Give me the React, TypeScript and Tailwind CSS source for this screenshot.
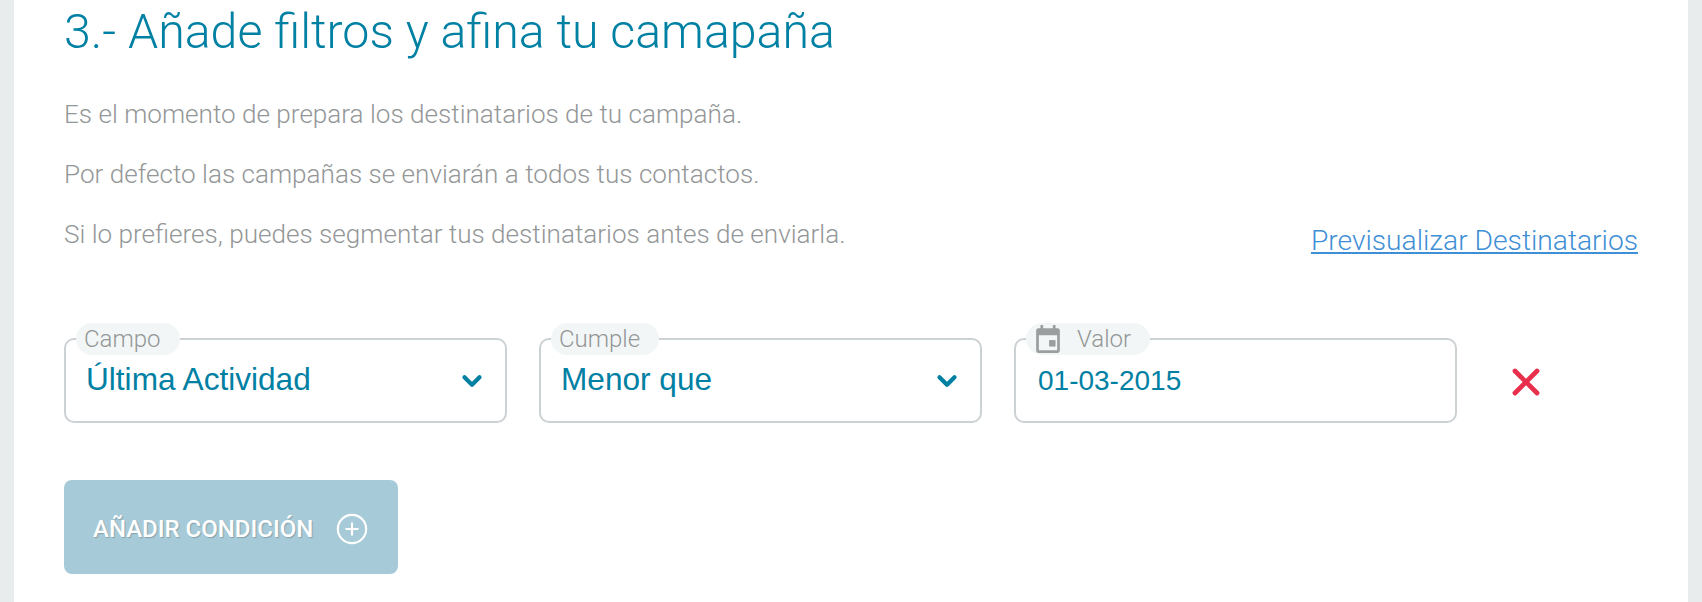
import { ChevronDown, CirclePlus, X } from 'lucide-react';

const roboto = 'font-[Roboto,sans-serif]';
const helvetica = "font-['Liberation_Sans',sans-serif]";

function CalendarIcon() {
  return (
    <svg width="26" height="28" viewBox="0 0 24 26" fill="#9b9e9e" className="shrink-0">
      <path d="M5 0h2.5v3h9V0H19v3h2a2 2 0 0 1 2 2v19a2 2 0 0 1-2 2H3a2 2 0 0 1-2-2V5a2 2 0 0 1 2-2h2V0zM3.5 9.5V23.5h17V9.5h-17z" />
      <rect x="13" y="14" width="6" height="6" />
    </svg>
  );
}

function Field({ label, value, select, calendar }: { label: string; value: string; select?: boolean; calendar?: boolean }) {
  return (
    <div className="relative h-[85px] flex-1 rounded-[10px] border-2 border-[#ccd1d4] bg-white px-[20px]">
      <div className={`absolute -top-[17px] left-[10px] flex h-[32px] items-center gap-[16px] rounded-full bg-[#f2f6f6] pr-[19px] text-[24px] font-light text-[#949797] ${calendar ? 'pl-[9px]' : 'pl-[8px]'} ${roboto}`}>
        {calendar && <CalendarIcon />}
        <span>{label}</span>
      </div>
      <div className="flex h-full items-start justify-between pt-[21px]">
        <span className={`leading-[36px] text-[#0080a3] ${helvetica} ${select ? 'text-[31.6px]' : 'mt-[2px] ml-[2px] text-[28px]'}`}>{value}</span>
        {select && <ChevronDown size={30} strokeWidth={3.4} className="mt-[5px] -mr-[2px] text-[#0080a3]" />}
      </div>
    </div>
  );
}

export default function App() {
  return (
    <div className="h-[602px] w-[1702px] overflow-hidden bg-[#e8ecec] px-[14px]">
      <div className="h-full bg-white pl-[50px] pr-[50px]">
        <h1 className={`text-[48.3px] leading-[64px] font-light text-[#0080a3] ${roboto}`}>3.- Añade filtros y afina tu camapaña</h1>

        <div className={`mt-[37px] flex items-start justify-between text-[26.1px] font-light text-[#949797] ${roboto}`}>
          <div className="flex flex-col gap-[33px] leading-[27px]">
            <p>Es el momento de prepara los destinatarios de tu campaña.</p>
            <p>Por defecto las campañas se enviarán a todos tus contactos.</p>
            <p>Si lo prefieres, puedes segmentar tus destinatarios antes de enviarla.</p>
          </div>
          <a href="#" className="mt-[126px] text-[28.2px] leading-[27px] text-[#3f8fd6] underline">Previsualizar Destinatarios</a>
        </div>

        <div className="mt-[84px] flex items-center">
          <div className="flex w-[1393px] gap-[32px]">
            <Field label="Campo" value="Última Actividad" select />
            <Field label="Cumple" value="Menor que" select />
            <Field label="Valor" value="01-03-2015" calendar />
          </div>
          <X size={44} strokeWidth={2.6} className="ml-[47px] mt-[2px] text-[#e8304c]" />
        </div>

        <button className={`mt-[57px] flex h-[94px] w-[334px] items-center rounded-[8px] bg-[#a6cad8] pt-[3px] pl-[29px] text-[24px] font-medium text-white [text-shadow:1px_1px_1px_rgba(0,0,0,0.2)] ${roboto}`}>
          AÑADIR CONDICIÓN
          <CirclePlus size={34} strokeWidth={1.5} className="ml-[22px]" />
        </button>
      </div>
    </div>
  );
}
